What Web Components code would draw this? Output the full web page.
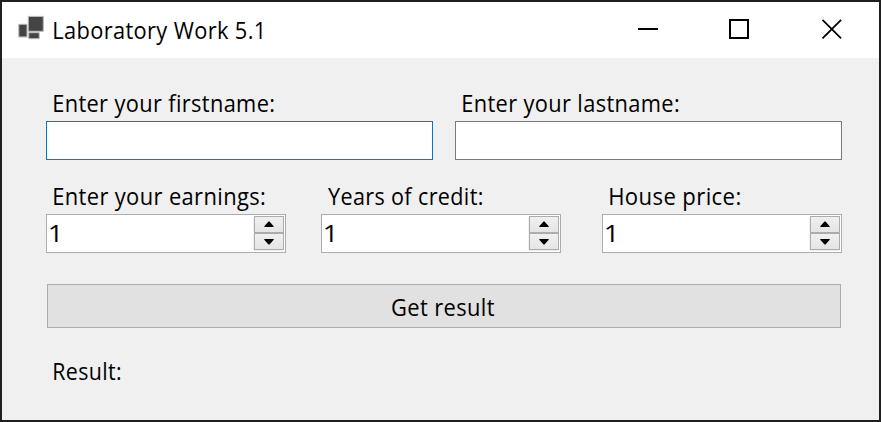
<!DOCTYPE html>
<html lang="en">
<head>
<meta charset="utf-8">
<title>Laboratory Work 5.1</title>
<style>
html, body { margin: 0; height: 100%; }
body { font: 400 24px/32px "Open Sans", "Noto Sans", sans-serif; letter-spacing: 0.4px; color: #000; overflow: hidden; }
</style>
</head>
<body>
<app-window>
  <title-bar slot="bar"><fit-text text="Laboratory Work 5.1" ink="208"></fit-text></title-bar>
  <form-row style="--gap:22px">
    <form-field label="Enter your firstname:" ink="219.8" inset="7.6"><text-box active></text-box></form-field>
    <form-field label="Enter your lastname:" ink="215.5" inset="7.7"><text-box></text-box></form-field>
  </form-row>
  <form-row style="--gap:35px; --top:20px">
    <form-field label="Enter your earnings:" ink="210.6" inset="7.6"><number-box value="1"></number-box></form-field>
    <form-field label="Years of credit:" ink="154.2" inset="6.5"><number-box value="1"></number-box></form-field>
    <form-field label="House price:" ink="130" inset="7.6" style="margin-left:6px"><number-box value="1"></number-box></form-field>
  </form-row>
  <push-button><fit-text text="Get result" ink="102"></fit-text></push-button>
  <result-line><fit-text text="Result:" ink="66.4"></fit-text></result-line>
</app-window>
<script>
function define(name, html, setup) {
  const template = document.createElement('template');
  template.innerHTML = html;
  customElements.define(name, class extends HTMLElement {
    connectedCallback() {
      if (this.shadowRoot) return;
      this.attachShadow({ mode: 'open' }).append(template.content.cloneNode(true));
      if (setup) setup(this, this.shadowRoot);
    }
  });
}
const pen = document.createElement('canvas').getContext('2d');

function addText(root, text, ink) {
  const line = document.createElement('fit-text');
  line.setAttribute('text', text);
  line.setAttribute('ink', ink);
  root.querySelector('.text').append(line);
}

/* A line of text whose visible width equals the "ink" attribute. */
define('fit-text', `<style>
  :host { display: block; height: 32px; white-space: pre; }
  span { display: inline-block; transform-origin: 0 50%; line-height: 32px; }
</style><span></span>`, (host, root) => {
  const span = root.querySelector('span');
  const ink = parseFloat(host.getAttribute('ink'));
  span.textContent = host.getAttribute('text');
  const css = getComputedStyle(host);
  pen.font = `${css.fontWeight} ${css.fontSize} ${css.fontFamily}`;
  pen.letterSpacing = css.letterSpacing;
  const m = pen.measureText(span.textContent);
  const k = ink / (m.actualBoundingBoxRight + m.actualBoundingBoxLeft);
  host.style.width = ink + 'px';
  span.style.transform = `translateX(${m.actualBoundingBoxLeft * k}px) scaleX(${k})`;
});

define('app-window', `<style>
  :host { display: flex; flex-direction: column; box-sizing: border-box; width: 881px; height: 422px;
    border: 2px solid #1f1f1f; background: #f0f0f0; }
  main { display: flex; flex-direction: column; padding: 29px 37px 0 44px; }
</style><slot name="bar"></slot><main><slot></slot></main>`);

define('title-bar', `<style>
  :host { display: flex; align-items: flex-start; box-sizing: border-box; height: 56px; background: #fff; padding-left: 15px; }
  .logo { width: 28px; height: 26px; margin-top: 13px; }
  .text { margin: 12px auto 0 8.7px; }
  .ctl { width: 22px; height: 22px; margin-top: 16px; }
  .ctl + .ctl { margin-left: 69px; }
  .ctl:last-of-type { margin-right: 36px; margin-left: 71px; }
</style>
<svg class="logo" viewBox="0 0 28 26">
  <path d="M1.5 9h9v13.5h-9zM11 1.5h15.5v15h-15.5zM11.5 17.5h11v6.5h-11z" fill="#ddd"/>
  <path d="M1.8 9.3h8.2v12.6h-8.2zM11.3 1.4h15v14.9h-15zM11.8 17.7h10.4v6h-10.4z" fill="#444" stroke="#bdbdbd"/>
</svg>
<div class="text"><slot></slot></div>
<svg class="ctl" viewBox="0 0 22 22"><path d="M1 10h20v2h-20z"/></svg>
<svg class="ctl" viewBox="0 0 22 22"><path d="M2 2h18v18h-18z" fill="none" stroke="#000" stroke-width="2"/></svg>
<svg class="ctl" viewBox="0 0 22 22"><path d="M1.5 1.8l18.6 18.6M20.1 1.8l-18.6 18.6" fill="none" stroke="#000" stroke-width="1.8"/></svg>`);

define('form-row', `<style>
  :host { display: flex; gap: var(--gap); margin-top: var(--top, 0); }
</style><slot></slot>`);

define('form-field', `<style>
  :host { display: block; }
  .text { margin-bottom: 2px; }
</style><div class="text"></div><slot></slot>`, (host, root) => {
  root.querySelector('.text').style.marginLeft = host.getAttribute('inset') + 'px';
  addText(root, host.getAttribute('label'), host.getAttribute('ink'));
});

define('text-box', `<style>
  :host { display: block; box-sizing: border-box; width: 387px; height: 39px; background: #fff; border: 1px solid #7a7a7a; }
  :host([active]) { border-color: #0078d7; }
</style>`);

define('number-box', `<style>
  :host { display: flex; justify-content: space-between; box-sizing: border-box; width: 240px; height: 39px;
    background: #fff; border: 1px solid #abadb3; padding: 1px 1px 0 3px; }
  .text { margin-top: 1px; }
  .spin { display: grid; grid-template-rows: 17px 17px; width: 30px; height: 34px; box-shadow: -1px 1px 0 #f0f0f0; }
  .spin div { box-sizing: border-box; border: 1px solid #acacac; background: linear-gradient(#f0f0f0, #e5e5e5); }
  svg { display: block; width: 28px; height: 15px; }
</style>
<div class="text"></div>
<div class="spin">
  <div><svg viewBox="0 0 28 15"><path d="M9.3 10v-.8l4.2-4.6h1l4.2 4.6v.8z"/></svg></div>
  <div><svg viewBox="0 0 28 15"><path d="M9.3 5v.8l4.2 4.6h1l4.2-4.6v-.8z"/></svg></div>
</div>`, (host, root) => addText(root, host.getAttribute('value'), '8'));

define('push-button', `<style>
  :host { display: flex; justify-content: center; box-sizing: border-box; width: 794px; height: 44px; margin: 31px 0 0 1px;
    padding: 6px 3px 0 0; background: #e1e1e1; border: 1px solid #adadad; }
</style><slot></slot>`);

define('result-line', `<style>
  :host { display: block; margin: 27px 0 0 7.7px; }
</style><slot></slot>`);
</script>
</body>
</html>
